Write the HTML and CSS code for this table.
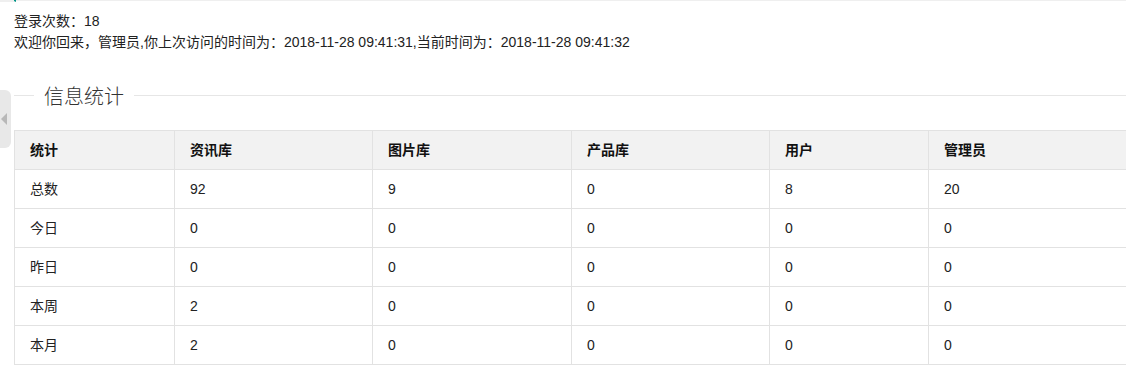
FILE: index.html
```html
<!DOCTYPE html>
<html lang="zh-CN">
<head>
<meta charset="utf-8">
<title>信息统计</title>
<link rel="stylesheet" href="styles.css">
</head>
<body>
<div class="topbar"><span class="tab-mark"></span></div>
<div class="side-toggle"><span class="arrow"></span></div>
<main class="main">
  <div class="welcome">
    <p>登录次数：18</p>
    <p>欢迎你回来，管理员,你上次访问的时间为：2018-11-28 09:41:31,当前时间为：2018-11-28 09:41:32</p>
  </div>
  <fieldset class="field-title">
    <legend>信息统计</legend>
  </fieldset>
  <table class="stat-table">
    <colgroup>
      <col class="c1"><col class="c2"><col class="c3"><col class="c4"><col class="c5"><col class="c6">
    </colgroup>
    <thead>
      <tr><th>统计</th><th>资讯库</th><th>图片库</th><th>产品库</th><th>用户</th><th>管理员</th></tr>
    </thead>
    <tbody>
      <tr><td>总数</td><td>92</td><td>9</td><td>0</td><td>8</td><td>20</td></tr>
      <tr><td>今日</td><td>0</td><td>0</td><td>0</td><td>0</td><td>0</td></tr>
      <tr><td>昨日</td><td>0</td><td>0</td><td>0</td><td>0</td><td>0</td></tr>
      <tr><td>本周</td><td>2</td><td>0</td><td>0</td><td>0</td><td>0</td></tr>
      <tr><td>本月</td><td>2</td><td>0</td><td>0</td><td>0</td><td>0</td></tr>
    </tbody>
  </table>
</main>
</body>
</html>
```

FILE: styles.css
```css
html, body {
  margin: 0;
  padding: 0;
  overflow: hidden;
  background: #fff;
}
body {
  font-family: "Liberation Sans", "Noto Sans CJK SC", sans-serif;
  font-size: 14px;
  color: #222;
}
.topbar {
  height: 2px;
  display: flex;
}
.topbar::after {
  content: "";
  flex: 1;
  height: 1px;
  background: #efefef;
}
.tab-mark {
  display: block;
  width: 14px;
  height: 1px;
  background: #efefef;
  border-right: 2px solid #009688;
  border-bottom: 1px solid #009688;
  border-bottom-color: transparent;
  box-shadow: 14px 1px 0 -0px transparent;
}
.side-toggle {
  position: absolute;
  left: 0;
  top: 90px;
  width: 11px;
  height: 58px;
  background: #e8e8e8;
  border-radius: 0 6px 6px 0;
}
.side-toggle .arrow {
  position: absolute;
  left: 1px;
  top: 23px;
  width: 0;
  height: 0;
  border-top: 6px solid transparent;
  border-bottom: 6px solid transparent;
  border-right: 6px solid #b8b8b8;
}
.main {
  padding: 9px 0 0 14px;
}
.welcome p {
  margin: 0;
  line-height: 21px;
}
.field-title {
  margin: 26px 0 19px;
  padding: 0;
  border: 0;
  border-top: 1px solid #e6e6e6;
  min-width: 0;
}
.field-title legend {
  margin-left: 20px;
  padding: 4px 10px 0;
  font-size: 20px;
  line-height: 28px;
  font-weight: 300;
  color: #333;
}
.stat-table {
  border-collapse: collapse;
  table-layout: fixed;
  width: 1140px;
}
.stat-table .c1 { width: 160px; }
.stat-table .c2 { width: 198px; }
.stat-table .c3 { width: 199px; }
.stat-table .c4 { width: 198px; }
.stat-table .c5 { width: 159px; }
.stat-table .c6 { width: 226px; }
.stat-table th,
.stat-table td {
  border: 1px solid #e2e2e2;
  padding: 9px 15px;
  line-height: 20px;
  text-align: left;
  font-size: 14px;
}
.stat-table th {
  background: #f2f2f2;
  font-weight: bold;
  color: #111;
}
.stat-table td {
  color: #222;
}
```
